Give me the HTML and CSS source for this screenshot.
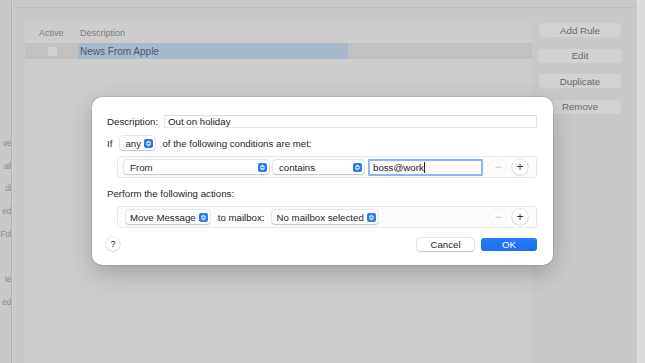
FILE: index.html
```html
<!DOCTYPE html>
<html>
<head>
<meta charset="utf-8">
<link rel="stylesheet" href="styles.css">
</head>
<body>
<div class="sidebar">
  <div class="side-item">ve</div>
  <div class="side-item">ail</div>
  <div class="side-item">di</div>
  <div class="side-item">ed</div>
  <div class="side-item">Fol</div>
  <div class="side-item"></div>
  <div class="side-item">te</div>
  <div class="side-item">ed</div>
</div>
<div class="divider"></div>
<div class="main">
  <div class="topbar"></div>
  <div class="content">
    <div class="table">
      <div class="thead">
        <div class="th th-active">Active</div>
        <div class="th th-desc">Description</div>
      </div>
      <div class="trow">
        <div class="td-active"><span class="checkbox"></span></div>
        <div class="td-desc"><span class="sel">News From Apple</span></div>
      </div>
    </div>
    <div class="side-buttons">
      <div class="sbtn">Add Rule</div>
      <div class="sbtn">Edit</div>
      <div class="sbtn">Duplicate</div>
      <div class="sbtn">Remove</div>
    </div>
  </div>
</div>
<div class="edge"></div>

<div class="sheet">
  <div class="row desc-row">
    <span class="label desc-label">Description:</span>
    <div class="field">Out on holiday</div>
  </div>
  <div class="row if-row">
    <span class="label">If</span>
    <div class="popup any-popup"><span>any</span><svg class="stepper" viewBox="0 0 9 9"><rect width="9" height="9" rx="2"/><path d="M2.8 3.9 L4.5 2.3 L6.2 3.9 M2.8 5.1 L4.5 6.7 L6.2 5.1"/></svg></div>
    <span class="label if-text">of the following conditions are met:</span>
  </div>
  <div class="box">
    <div class="popup from-popup"><span>From</span><svg class="stepper" viewBox="0 0 9 9"><rect width="9" height="9" rx="2"/><path d="M2.8 3.9 L4.5 2.3 L6.2 3.9 M2.8 5.1 L4.5 6.7 L6.2 5.1"/></svg></div>
    <div class="popup contains-popup"><span>contains</span><svg class="stepper" viewBox="0 0 9 9"><rect width="9" height="9" rx="2"/><path d="M2.8 3.9 L4.5 2.3 L6.2 3.9 M2.8 5.1 L4.5 6.7 L6.2 5.1"/></svg></div>
    <div class="focus-field">boss@work<span class="caret"></span></div>
    <div class="spacer"></div>
    <div class="circle minus">−</div>
    <div class="circle plus">+</div>
  </div>
  <div class="label perform">Perform the following actions:</div>
  <div class="box">
    <div class="popup move-popup"><span>Move Message</span><svg class="stepper" viewBox="0 0 9 9"><rect width="9" height="9" rx="2"/><path d="M2.8 3.9 L4.5 2.3 L6.2 3.9 M2.8 5.1 L4.5 6.7 L6.2 5.1"/></svg></div>
    <span class="label to-mailbox">to mailbox:</span>
    <div class="popup mailbox-popup"><span>No mailbox selected</span><svg class="stepper" viewBox="0 0 9 9"><rect width="9" height="9" rx="2"/><path d="M2.8 3.9 L4.5 2.3 L6.2 3.9 M2.8 5.1 L4.5 6.7 L6.2 5.1"/></svg></div>
    <div class="spacer"></div>
    <div class="circle minus">−</div>
    <div class="circle plus">+</div>
  </div>
  <div class="footer">
    <div class="help">?</div>
    <div class="spacer"></div>
    <div class="btn cancel">Cancel</div>
    <div class="btn ok">OK</div>
  </div>
</div>
</body>
</html>
```

FILE: styles.css
```css
* { box-sizing: border-box; }
html, body { margin: 0; padding: 0; }
body {
  width: 645px;
  height: 363px;
  overflow: hidden;
  display: flex;
  background: #c9c9c9;
  font-family: "Liberation Sans", Arial, sans-serif;
  font-size: 9.7px;
  color: #262626;
  position: relative;
}

/* background window */
.sidebar {
  width: 11px;
  padding-top: 137px;
  display: flex;
  flex-direction: column;
  background: #c8c8c8;
}
.side-item {
  height: 22.7px;
  display: flex;
  justify-content: flex-end;
  white-space: nowrap;
  color: #8f8f8f;
  font-size: 8.5px;
  line-height: 12px;
  letter-spacing: -0.4px;
}
.divider {
  width: 2px;
  border-left: 1px solid #b3b3b3;
  background: #d0d0d0;
}
.main {
  width: 623px;
  display: flex;
  flex-direction: column;
}
.topbar {
  height: 8px;
  border-bottom: 1px solid #bebebe;
  background: #c8c8c8;
}
.content {
  flex: 1;
  display: flex;
  padding: 14px 0 0 12px;
}
.table {
  width: 507px;
  background: #cdcdcd;
  display: flex;
  flex-direction: column;
}
.thead {
  height: 21px;
  display: flex;
  align-items: center;
  color: #7a7a7a;
  font-size: 9px;
}
.th-active { width: 55px; padding-left: 14px; }
.trow {
  height: 16px;
  display: flex;
  align-items: center;
  background: #c1c1c1;
}
.td-active { width: 53px; display: flex; padding-left: 23px; }
.checkbox {
  width: 9px;
  height: 9px;
  border-radius: 2px;
  background: #d2d2d2;
}
.td-desc { flex: 1; height: 100%; }
.sel {
  display: flex;
  align-items: center;
  height: 100%;
  width: 270px;
  background: #a8b9ca;
  color: #50586a;
  padding-left: 2px;
  font-size: 10px;
}
.side-buttons {
  margin-left: 7px;
  width: 82px;
  display: flex;
  flex-direction: column;
  gap: 11.5px;
  padding-top: 1px;
}
.sbtn {
  height: 14px;
  border-radius: 3px;
  background: #d2d2d2;
  color: #6a6a6a;
  display: flex;
  align-items: center;
  justify-content: center;
  font-size: 9.7px;
}
.edge {
  flex: 1;
  background: #dcdcdc;
  border-left: 1px solid #cfcfcf;
}

/* sheet */
.sheet {
  position: absolute;
  left: 92px;
  top: 97px;
  width: 461px;
  height: 168px;
  background: #fff;
  border-radius: 10px;
  box-shadow: 0 0 0 0.5px rgba(0,0,0,0.18), 0 8px 24px rgba(0,0,0,0.22);
  padding: 17px 16px 0 15px;
  display: flex;
  flex-direction: column;
}
.row {
  display: flex;
  align-items: center;
  height: 14px;
}
.label { white-space: nowrap; }
.desc-label { width: 57px; }
.field {
  flex: 1;
  height: 13px;
  border: 1px solid #e6e6e6;
  border-top-color: #dcdcdc;
  padding-left: 3px;
  line-height: 11px;
  color: #222;
}
.if-row { margin-top: 8px; }
.popup {
  height: 14px;
  display: flex;
  align-items: center;
  background: #fff;
  border-radius: 3px;
  box-shadow: 0 0 0 0.5px rgba(0,0,0,0.12), 0 0.5px 1.5px rgba(0,0,0,0.18);
  padding: 0 2px 0 6px;
  white-space: nowrap;
}
.popup span { flex: 1; }
.stepper {
  width: 9px;
  height: 9px;
  flex: none;
}
.stepper rect { fill: #2d7bf4; }
.stepper path {
  fill: none;
  stroke: #fff;
  stroke-width: 1.1;
  stroke-linecap: round;
  stroke-linejoin: round;
}
.any-popup { margin-left: 8px; width: 35px; padding-left: 5px; }
.if-text { margin-left: 7px; }
.box {
  margin-top: 6px;
  margin-left: 10px;
  height: 22px;
  border: 1px solid #e8e8e8;
  border-radius: 3px;
  background: #fcfcfc;
  display: flex;
  align-items: center;
  padding: 0 8px 0 6px;
}
.from-popup { width: 145px; }
.contains-popup { width: 91px; margin-left: 4px; }
.focus-field {
  margin-left: 4px;
  width: 115px;
  height: 17px;
  border: 2px solid #8fb6f2;
  border-radius: 1px;
  padding-left: 3px;
  line-height: 13px;
  display: flex;
  align-items: center;
  color: #222;
}
.caret {
  width: 1px;
  height: 11px;
  background: #222;
}
.spacer { flex: 1; }
.circle {
  width: 16px;
  height: 16px;
  border-radius: 50%;
  display: flex;
  align-items: center;
  justify-content: center;
  font-size: 12px;
  line-height: 1;
}
.minus {
  color: #c8c8c8;
  box-shadow: 0 0 0 0.5px rgba(0,0,0,0.06);
}
.plus {
  margin-left: 6px;
  color: #333;
  background: #fff;
  box-shadow: 0 0 0 0.5px rgba(0,0,0,0.12), 0 0.5px 1.5px rgba(0,0,0,0.2);
}
.perform {
  margin-top: 10px;
  height: 12px;
  line-height: 12px;
}
.move-popup { margin-left: 2px; padding-left: 4px; gap: 3px; }
.to-mailbox { margin-left: 8px; }
.mailbox-popup { width: 106px; margin-left: 7px; padding-left: 5px; }
.footer {
  margin-top: 9px;
  display: flex;
  align-items: center;
  height: 14px;
}
.help {
  width: 14px;
  height: 14px;
  border-radius: 50%;
  background: #fff;
  box-shadow: 0 0 0 0.5px rgba(0,0,0,0.12), 0 0.5px 1.5px rgba(0,0,0,0.2);
  display: flex;
  align-items: center;
  justify-content: center;
  font-size: 9px;
  margin-left: -1px;
}
.btn {
  height: 13px;
  width: 57px;
  border-radius: 3px;
  display: flex;
  align-items: center;
  justify-content: center;
}
.cancel {
  background: #fff;
  box-shadow: 0 0 0 0.5px rgba(0,0,0,0.12), 0 0.5px 1.5px rgba(0,0,0,0.2);
}
.ok {
  margin-left: 7px;
  width: 56px;
  background: linear-gradient(#2a7cf7, #1a6ef3);
  color: #fff;
}
```
